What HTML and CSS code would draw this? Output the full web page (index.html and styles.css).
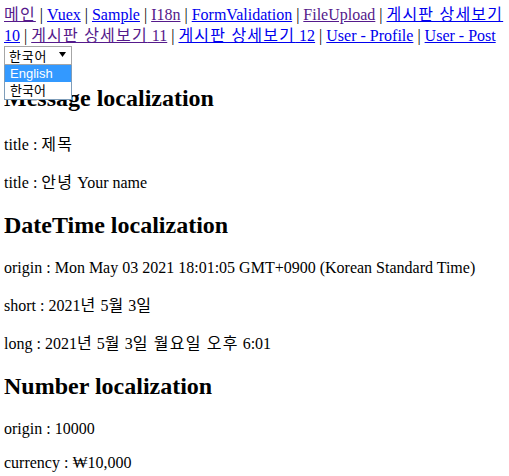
FILE: index.html
```html
<!DOCTYPE html>
<html lang="ko">
<head>
<meta charset="utf-8">
<title>I18n</title>
<link rel="stylesheet" href="styles.css">
</head>
<body>
<div class="app">
  <nav class="nav">
    <a class="link visited" href="#/"><span class="ko">메인</span></a> | <a class="link" href="#/vuex">Vuex</a> | <a class="link" href="#/sample">Sample</a> | <a class="link visited" href="#/i18n">I18n</a> | <a class="link" href="#/form">FormValidation</a> | <a class="link visited" href="#/upload">FileUpload</a> | <a class="link" href="#/board/10"><span class="ko">게시판 상세보기</span> 10</a> | <a class="link visited" href="#/board/11"><span class="ko">게시판 상세보기</span> 11</a> | <a class="link" href="#/board/12"><span class="ko">게시판 상세보기</span> 12</a> | <a class="link" href="#/user/profile">User - Profile</a> | <a class="link" href="#/user/post">User - Post</a>
  </nav>
  <div class="locale">
    <span class="select-wrap">
      <select class="select" aria-label="locale">
        <option selected>한국어</option>
        <option>English</option>
      </select>
      <svg class="arrow" width="7" height="5" viewBox="0 0 7 5" aria-hidden="true"><polygon points="0,0 7,0 3.5,5" fill="#000"/></svg>
      <ul class="popup">
        <li class="opt active">English</li>
        <li class="opt">한국어</li>
      </ul>
    </span>
  </div>
  <h2 class="title">Message localization</h2>
  <p class="line">title : <span class="ko">제목</span></p>
  <p class="line">title : <span class="ko">안녕</span> Your name</p>
  <h2 class="title">DateTime localization</h2>
  <p class="line plain">origin : Mon May 03 2021 18:01:05 GMT+0900 (Korean Standard Time)</p>
  <p class="line">short : 2021<span class="ko">년</span> 5<span class="ko">월</span> 3<span class="ko">일</span></p>
  <p class="line">long : 2021<span class="ko">년</span> 5<span class="ko">월</span> 3<span class="ko">일 월요일 오후</span> 6:01</p>
  <h2 class="title">Number localization</h2>
  <p class="line plain">origin : 10000</p>
  <p class="line plain">currency : ₩10,000</p>
</div>
</body>
</html>
```

FILE: styles.css
```css
html, body {
  background: #fff;
}
body {
  margin: 4px;
  font-family: "Liberation Serif", "Noto Sans CJK KR", serif;
  font-size: 16px;
  color: #000;
}
.ko {
  letter-spacing: 1.2px;
}
.nav {
  display: block;
  line-height: 21px;
}
.link {
  color: #0000ee;
  text-decoration: underline;
}
.link.visited {
  color: #551a8b;
}
.locale {
  display: block;
  line-height: 19px;
  height: 19px;
}
.select-wrap {
  position: relative;
  display: inline-block;
  vertical-align: top;
}
.select {
  appearance: none;
  -webkit-appearance: none;
  display: block;
  box-sizing: border-box;
  width: 68px;
  height: 19px;
  margin: 0;
  padding: 0 0 0 4px;
  border: 1px solid #a6a6a6;
  border-radius: 0;
  background: #fff;
  font-family: "Noto Sans CJK KR", sans-serif;
  font-size: 13px;
  letter-spacing: 0.8px;
  line-height: 17px;
  color: #000;
}
.arrow {
  position: absolute;
  right: 6px;
  top: 6px;
  pointer-events: none;
}
.popup {
  position: absolute;
  left: 0;
  top: 19px;
  box-sizing: border-box;
  width: 68px;
  margin: 0;
  padding: 0;
  list-style: none;
  background: #fff;
  border: 1px solid #7f9db9;
  border-top: 0;
  z-index: 2;
}
.opt {
  height: 17px;
  line-height: 17px;
  padding-left: 5px;
  font-family: "Liberation Sans", "Noto Sans CJK KR", sans-serif;
  font-size: 13px;
  color: #000;
}
.opt.active {
  background: #3399ff;
  color: #fff;
}
.title {
  font-size: 24px;
  font-weight: bold;
  margin: 20px 0;
}
.line {
  margin: 16px 0;
  padding-top: 4px;
  line-height: 18px;
}
.line.plain {
  padding-top: 0;
  line-height: normal;
}
```
